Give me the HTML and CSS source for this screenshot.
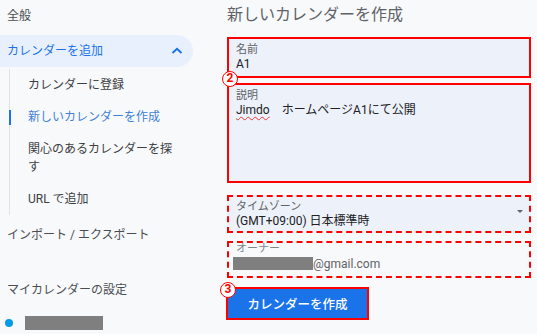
FILE: index.html
```html
<!DOCTYPE html>
<html lang="ja">
<head>
<meta charset="utf-8">
<title>新しいカレンダーを作成</title>
<link rel="stylesheet" href="styles.css">
</head>
<body>
<div class="page">
	<nav class="sidebar">
		<div class="nav-item">全般</div>
		<div class="nav-item nav-open">
			<span>カレンダーを追加</span>
			<svg class="chevron" width="12" height="7" viewBox="0 0 12 7"><path d="M1.5 6 L6 1.8 L10.5 6" fill="none" stroke="#1a73e8" stroke-width="2"/></svg>
		</div>
		<ul class="sub-list">
			<li class="sub-item">カレンダーに登録</li>
			<li class="sub-item active">新しいカレンダーを作成</li>
			<li class="sub-item">関心のあるカレンダーを探す</li>
			<li class="sub-item">URL で追加</li>
		</ul>
		<div class="nav-item nav-import">インポート / エクスポート</div>
		<div class="nav-item nav-section">マイカレンダーの設定</div>
		<div class="cal-row"><span class="cal-dot"></span><span class="masked"></span></div>
	</nav>

	<main class="main">
		<h1 class="title">新しいカレンダーを作成</h1>

		<div class="field mark-solid">
			<div class="field-label">名前</div>
			<div class="field-value">A1</div>
		</div>

		<div class="field field-desc mark-solid">
			<span class="badge">2</span>
			<div class="field-label">説明</div>
			<div class="field-value"><span class="typo">Jimdo</span>　ホームページA1にて公開</div>
		</div>

		<div class="field field-select mark-dashed">
			<div>
				<div class="field-label">タイムゾーン</div>
				<div class="field-value">(GMT+09:00) 日本標準時</div>
			</div>
			<span class="caret"></span>
		</div>

		<div class="field field-owner mark-dashed">
			<div class="field-label">オーナー</div>
			<div class="field-value"><span class="masked masked-mail"></span>@gmail.com</div>
		</div>

		<button class="create-btn"><span class="badge badge-btn">3</span>カレンダーを作成</button>
	</main>
</div>
</body>
</html>
```

FILE: styles.css
```css
html {
	background: #f8f9fa;
}
body {
	margin: 0;
	font-family: Roboto, "Noto Sans CJK JP", sans-serif;
	color: #3c4043;
}
.page {
	display: flex;
	width: 537px;
	height: 334px;
	overflow: hidden;
}

/* SIDEBAR */
.sidebar {
	width: 195px;
	flex: none;
	font-size: 12px;
}
.nav-item {
	height: 32px;
	line-height: 32px;
	padding-left: 7px;
	color: #4a4e52;
}
.nav-open {
	display: flex;
	justify-content: space-between;
	align-items: center;
	margin-top: 3px;
	width: 193px;
	box-sizing: border-box;
	padding-right: 10px;
	background: #e8f0fe;
	border-radius: 0 16px 16px 0;
	color: #1a73e8;
}
.chevron {
	display: block;
	margin-top: -2px;
}
.sub-list {
	list-style: none;
	margin: 2px 0 0 9px;
	padding: 0;
	border-left: 1px solid #e0e2e6;
}
.sub-item {
	margin-left: -1px;
	padding: 7px 17px 7px 19px;
	line-height: 18px;
}
.sub-item.active {
	color: #3f7fd9;
	background: linear-gradient(#1a73e8, #1a73e8) no-repeat 0 50% / 2px 15px;
}
.nav-import {
	margin-top: 4px;
}
.nav-section {
	margin-top: 23px;
}
.cal-row {
	display: flex;
	align-items: center;
	height: 34px;
	padding-left: 5px;
}
.cal-dot {
	width: 8px;
	height: 8px;
	border-radius: 50%;
	background: #039be5;
	margin-right: 12px;
}
.masked {
	display: inline-block;
	width: 78px;
	height: 14px;
	background: #7f7f7f;
}

/* MAIN FORM */
.main {
	flex: 1;
	padding: 0 6px 0 32px;
}
.title {
	margin: 0 0 7px;
	font-size: 16px;
	font-weight: normal;
	line-height: 30px;
	color: #5f6368;
}
.field {
	position: relative;
	box-sizing: border-box;
	padding: 4px 7px;
	background: #edf1f9;
}
.mark-solid {
	border: 2px solid #f00;
}
.mark-dashed {
	border: 2px dashed #f00;
}
.field-label {
	font-size: 11px;
	line-height: 13px;
	color: #5f6368;
}
.field-value {
	font-size: 12px;
	line-height: 16px;
	color: #202124;
}
.field-desc {
	margin-top: 5px;
	height: 100px;
}
.typo {
	text-decoration: underline wavy #e53935;
	text-decoration-thickness: 1px;
	text-underline-offset: 2px;
}
.field-select {
	display: flex;
	justify-content: space-between;
	align-items: center;
	margin-top: 12px;
	padding: 3px 6px 2px 7px;
}
.caret {
	width: 0;
	height: 0;
	border-left: 3px solid transparent;
	border-right: 3px solid transparent;
	border-top: 3px solid #5f6368;
	margin-bottom: 6px;
}
.field-owner {
	margin-top: 8px;
	padding: 0 7px 2px;
	background: transparent;
}
.field-owner .field-label {
	line-height: 11px;
	color: #80868b;
}
.field-owner .field-value {
	line-height: 20px;
	color: #5f6368;
}
.masked-mail {
	width: 80px;
	height: 13px;
	margin-left: -3px;
	vertical-align: -2px;
}
.create-btn {
	position: relative;
	display: block;
	margin: 9px 0 0 -1px;
	width: 143px;
	height: 33px;
	border: 2px solid #f00;
	background: #1a73e8;
	color: #fff;
	font-family: Roboto, "Noto Sans CJK JP", sans-serif;
	font-size: 12.5px;
	font-weight: 500;
	padding: 0;
}

/* annotation numbers */
.badge {
	position: absolute;
	top: -14px;
	left: -7px;
	width: 16px;
	height: 16px;
	box-sizing: border-box;
	border: 1.5px solid #f00;
	border-radius: 50%;
	background: #fff;
	color: #f00;
	font: bold 12px/13px Roboto, sans-serif;
	text-align: center;
}
.badge-btn {
	top: -7px;
	left: -8px;
}
```
